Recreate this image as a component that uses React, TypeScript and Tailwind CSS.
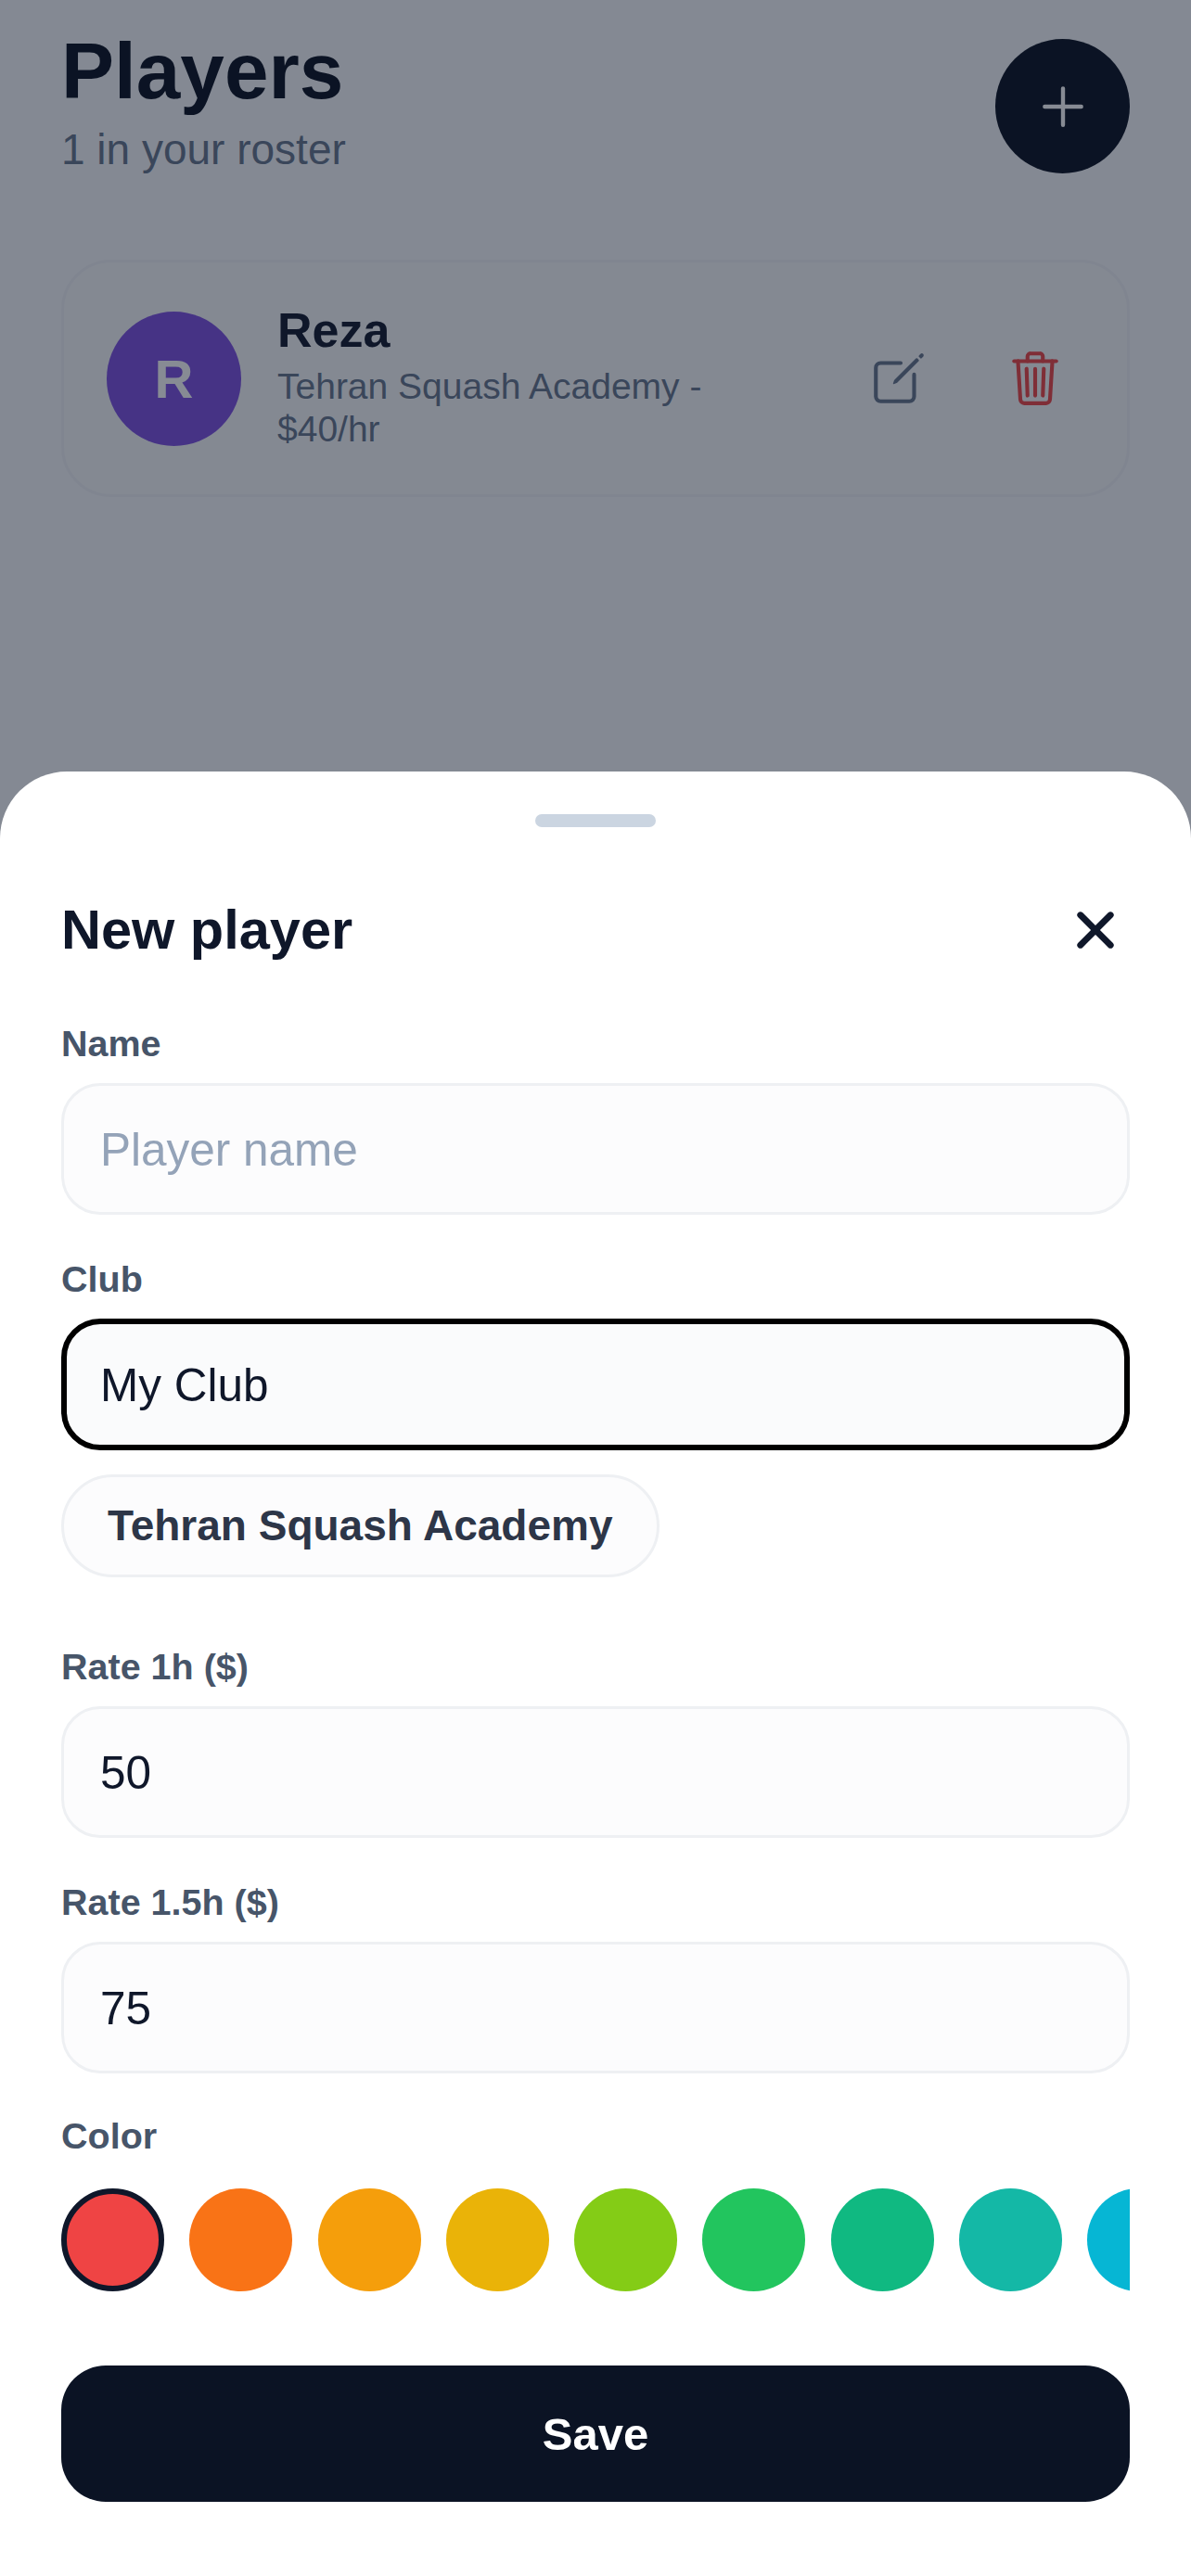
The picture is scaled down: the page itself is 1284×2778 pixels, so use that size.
import { IoAdd, IoClose, IoCreateOutline, IoTrashOutline } from "react-icons/io5";

const swatches = [
  { id: "red", className: "bg-[#ef4444] border-[6px] border-[#0f172a]" },
  { id: "orange", className: "bg-[#f97316]" },
  { id: "amber", className: "bg-[#f59e0b]" },
  { id: "yellow", className: "bg-[#eab308]" },
  { id: "lime", className: "bg-[#84cc16]" },
  { id: "green", className: "bg-[#22c55e]" },
  { id: "emerald", className: "bg-[#10b981]" },
  { id: "teal", className: "bg-[#14b8a6]" },
  { id: "cyan", className: "bg-[#06b6d4]" },
];

function Field({
  label,
  value,
  placeholder,
  focused,
}: {
  label: string;
  value?: string;
  placeholder?: string;
  focused?: boolean;
}) {
  return (
    <label className="block">
      <span className="block text-[39.5px] leading-[46px] font-bold text-[#475569]">{label}</span>
      <input
        readOnly
        value={value ?? ""}
        placeholder={placeholder}
        className={
          focused
            ? "mt-[20px] block w-full h-[142px] rounded-[42px] border-[6px] border-black bg-[#fafbfc] px-[36px] text-[49.5px] text-[#0f172a] outline-none"
            : "mt-[20px] block w-full h-[142px] rounded-[42px] border-[3px] border-[#eef0f3] bg-[#fcfcfd] px-[39px] text-[49.5px] text-[#0f172a] outline-none placeholder:text-[#94a3b8]"
        }
      />
    </label>
  );
}

export default function App() {
  return (
    <div className="relative h-[2778px] w-[1284px] overflow-hidden bg-[#f8fafc] font-['Liberation_Sans',Arial,sans-serif]">
      <main className="px-[66px] pt-[27px]">
        <header className="flex items-start justify-between">
          <div>
            <h1 className="text-[85.5px] leading-[100px] font-bold text-[#070f1e]">Players</h1>
            <p className="mt-[7px] text-[46px] leading-[54px] text-[#64748b]">1 in your roster</p>
          </div>
          <button className="mt-[15px] flex h-[145px] w-[145px] items-center justify-center rounded-full bg-[#070f1e] text-white">
            <IoAdd size={70} />
          </button>
        </header>

        <section className="mt-[92px] flex h-[256px] items-center gap-[39px] rounded-[54px] border-[3px] border-[#f1f3f6] bg-[#f8fafb] pl-[46px] pr-[45px]">
          <div className="flex h-[145px] w-[145px] shrink-0 items-center justify-center rounded-full bg-[#7c4fe0] text-[58px] font-bold text-white">
            R
          </div>
          <div className="min-w-0 flex-1 pb-[4px]">
            <div className="text-[52px] leading-[60px] font-bold text-[#0f172a]">Reza</div>
            <div className="mt-[8px] text-[39px] leading-[46px] text-[#64748b]">
              Tehran Squash Academy - $40/hr
            </div>
          </div>
          <div className="flex shrink-0 gap-[39px]">
            <button className="flex h-[108px] w-[108px] items-center justify-center text-[#64748b]">
              <IoCreateOutline size={66} />
            </button>
            <button className="flex h-[108px] w-[108px] items-center justify-center text-[#ef4444]">
              <IoTrashOutline size={66} />
            </button>
          </div>
        </section>
      </main>

      {/* Scrim over the roster while the sheet is open */}
      <div className="absolute inset-0 bg-[#0f172a]/50" />

      <div className="absolute inset-x-0 bottom-0 h-[1946px] rounded-t-[72px] bg-white px-[66px] pt-[46px]">
        <div className="mx-auto h-[14px] w-[130px] rounded-full bg-[#cbd5e1]" />

        <div className="mt-[76px] flex h-[70px] items-center justify-between">
          <h2 className="text-[59.5px] font-bold text-[#0f172a]">New player</h2>
          <button className="text-[#0f172a]">
            <IoClose size={74} />
          </button>
        </div>

        <div className="mt-[64px] flex flex-col gap-[46px]">
          <Field label="Name" placeholder="Player name" />
          <div>
            <Field label="Club" value="My Club" focused />
            <button className="mt-[26px] block h-[111px] rounded-full border-[3px] border-[#eef0f3] bg-[#fcfcfd] px-[47px] text-[46px] font-bold text-[#2d3648]">
              Tehran Squash Academy
            </button>
          </div>
        </div>

        <div className="mt-[73px] flex flex-col gap-[46px]">
          <Field label="Rate 1h ($)" value="50" />
          <Field label="Rate 1.5h ($)" value="75" />
          <div className="-mt-[2px]">
            <span className="block text-[39.5px] leading-[46px] font-bold text-[#475569]">Color</span>
            <div className="mt-[34px] flex gap-[27.3px] overflow-hidden">
              {swatches.map((s) => (
                <span key={s.id} className={`h-[111px] w-[111px] shrink-0 rounded-full ${s.className}`} />
              ))}
            </div>
          </div>
        </div>

        <button className="mt-[80px] block h-[147px] w-full rounded-[48px] bg-[#0b1324] pt-[2px] text-[49px] font-bold text-white">
          Save
        </button>
      </div>
    </div>
  );
}
